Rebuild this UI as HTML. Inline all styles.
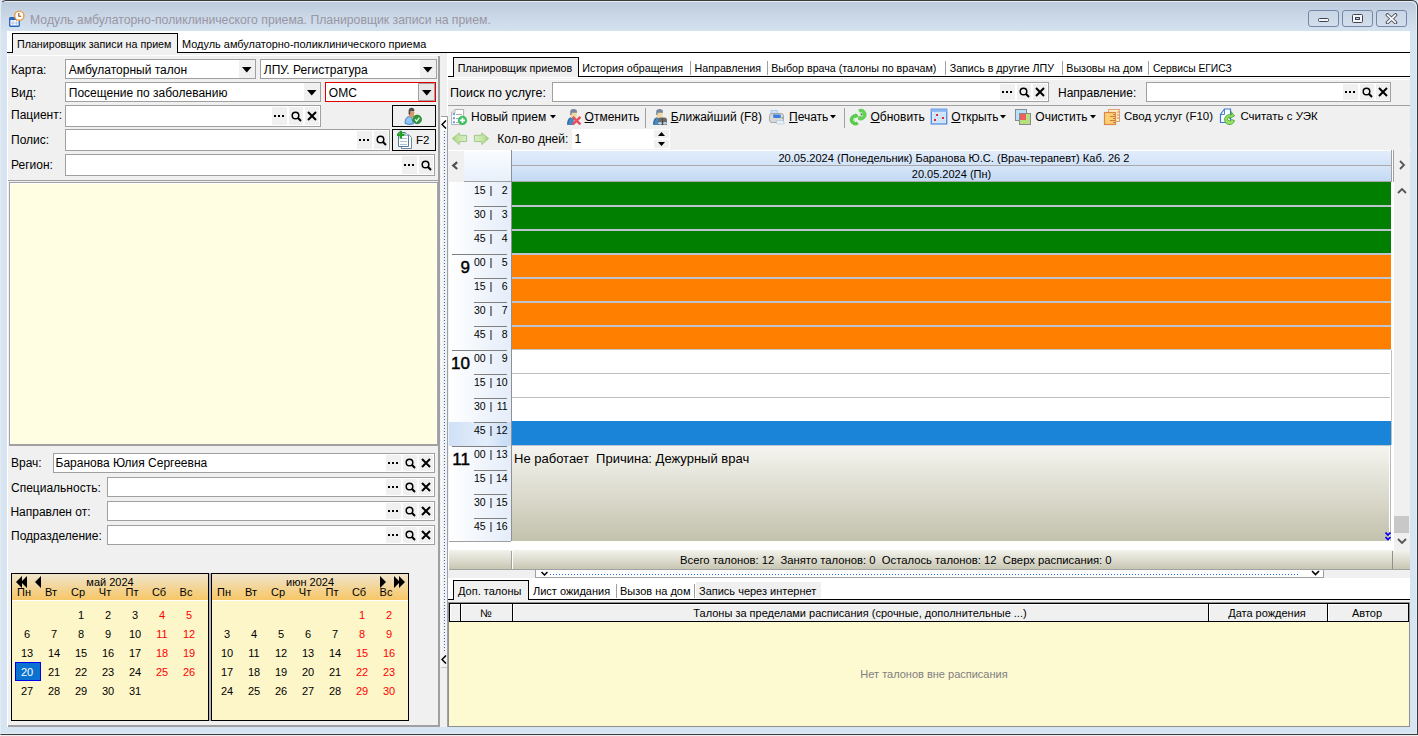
<!DOCTYPE html>
<html><head><meta charset="utf-8"><style>
html,body{margin:0;padding:0;width:1418px;height:736px;overflow:hidden;background:#d7e4f2;}
body{position:relative;font-family:"Liberation Sans",sans-serif;}
div{position:absolute;}
.t{line-height:1;white-space:pre;}
u{text-decoration:underline;text-underline-offset:1px;}
</style></head><body>
<div style="left:0px;top:735px;width:1418px;height:1px;background:#eef0f2;"></div>
<div style="left:0px;top:0px;width:1418px;height:735px;box-sizing:border-box;border:1px solid #3a3a3a;border-left-color:#e6ebf1;border-radius:6px 6px 0 0;background:linear-gradient(#bccbdc 0px,#d6e3f1 31px,#d7e4f2 31px);box-shadow:inset -1px 1px 0 #e4ecf6, inset 0 -1px 0 #e4ecf6;"></div>
<svg style="position:absolute;left:8px;top:10px" width="18" height="18" viewBox="0 0 18 18"><rect x="1.7" y="7.7" width="9.6" height="8.6" rx="1" fill="#fff" stroke="#2a66c0" stroke-width="1.4"/><rect x="1.7" y="7.7" width="9.6" height="2.3" fill="#2a66c0"/><path d="M1.7 13h9.6M5 10v6M8.3 10v6" stroke="#9cb8e0" stroke-width="0.8"/><circle cx="11.3" cy="5.7" r="4.6" fill="#fff" stroke="#ec9a3a" stroke-width="1.4"/><path d="M10.8 3v3.2h2.4" stroke="#a04818" stroke-width="1.1" fill="none"/></svg>
<div class="t" style="left:30px;top:14.13px;font-size:12.25px;color:#9a96a4;">Модуль амбулаторно-поликлинического приема. Планировщик записи на прием.</div>
<div style="left:1308px;top:10px;width:31px;height:17px;box-sizing:border-box;border:1px solid #7686a6;border-radius:3px;background:linear-gradient(#c8d5e4,#d3dfec);"></div>
<div style="left:1318px;top:18px;width:11px;height:4px;box-sizing:border-box;border:1px solid #3e4656;border-radius:1.5px;background:#f4f4f4;"></div>
<div style="left:1342px;top:10px;width:31px;height:17px;box-sizing:border-box;border:1px solid #7686a6;border-radius:3px;background:linear-gradient(#c8d5e4,#d3dfec);"></div>
<div style="left:1352px;top:14px;width:11px;height:9px;box-sizing:border-box;border:1px solid #3e4656;border-radius:1.5px;background:#f6f6f6;"></div>
<div style="left:1355px;top:17px;width:5px;height:3px;box-sizing:border-box;border:1px solid #3e4656;background:#b8c8dc;"></div>
<div style="left:1376px;top:10px;width:31px;height:17px;box-sizing:border-box;border:1px solid #7686a6;border-radius:3px;background:linear-gradient(#c8d5e4,#d3dfec);"></div>
<svg style="position:absolute;left:1385px;top:13px" width="13" height="11" viewBox="0 0 13 11"><path d="M2.5 2L10.5 9.5M10.5 2L2.5 9.5" stroke="#3e4656" stroke-width="3.6" stroke-linecap="round"/><path d="M2.5 2L10.5 9.5M10.5 2L2.5 9.5" stroke="#f6f6f6" stroke-width="1.8" stroke-linecap="round"/></svg>
<div style="left:7px;top:31px;width:1403px;height:696px;background:#fff;"></div>
<div style="left:7px;top:52px;width:5px;height:1px;background:#000;"></div>
<div style="left:177px;top:52px;width:1233px;height:1px;background:#000;"></div>
<div style="left:12px;top:33px;width:166px;height:21px;box-sizing:border-box;border:1px solid #000;border-bottom:none;background:#f0f0f0;"></div>
<div class="t" style="left:17px;top:38.94px;font-size:10.7px;color:#000;">Планировщик записи на прием</div>
<div class="t" style="left:182px;top:38.73px;font-size:10.95px;color:#000;">Модуль амбулаторно-поликлинического приема</div>
<div style="left:7px;top:53px;width:440px;height:674px;background:#f0f0f0;"></div>
<div style="left:7px;top:53px;width:1px;height:674px;background:#fff;"></div>
<div style="left:8px;top:55px;width:432px;height:1px;background:#fff;"></div>
<div style="left:438px;top:56px;width:2px;height:671px;background:#a0a0a0;"></div>
<div style="left:8px;top:725px;width:432px;height:2px;background:#a0a0a0;"></div>
<div class="t" style="left:11px;top:63.84px;font-size:12px;color:#000;">Карта:</div>
<div style="left:65px;top:59px;width:191px;height:20px;box-sizing:border-box;border:1px solid #a0a0a0;background:#fff;"></div>
<div class="t" style="left:68.8px;top:63.84px;font-size:12px;color:#000;">Амбулаторный талон</div>
<div style="left:239px;top:60px;width:16px;height:18px;background:#f0f0f0;"></div>
<svg style="position:absolute;left:242px;top:66.8px" width="10" height="6" viewBox="0 0 10 6"><path d="M0 0H9.5L4.75 5.5Z" fill="#000"/></svg>
<div style="left:260px;top:59px;width:177px;height:20px;box-sizing:border-box;border:1px solid #a0a0a0;background:#fff;"></div>
<div class="t" style="left:263.8px;top:63.84px;font-size:12px;color:#000;">ЛПУ. Регистратура</div>
<div style="left:420px;top:60px;width:16px;height:18px;background:#f0f0f0;"></div>
<svg style="position:absolute;left:423px;top:66.8px" width="10" height="6" viewBox="0 0 10 6"><path d="M0 0H9.5L4.75 5.5Z" fill="#000"/></svg>
<div class="t" style="left:11px;top:86.84px;font-size:12px;color:#000;">Вид:</div>
<div style="left:65px;top:82px;width:256px;height:20px;box-sizing:border-box;border:1px solid #a0a0a0;background:#fff;"></div>
<div class="t" style="left:68.8px;top:86.84px;font-size:12px;color:#000;">Посещение по заболеванию</div>
<div style="left:304px;top:83px;width:16px;height:18px;background:#f0f0f0;"></div>
<svg style="position:absolute;left:307px;top:89.8px" width="10" height="6" viewBox="0 0 10 6"><path d="M0 0H9.5L4.75 5.5Z" fill="#000"/></svg>
<div style="left:325px;top:82px;width:111px;height:20px;box-sizing:border-box;border:1px solid #e00000;background:#fff;"></div>
<div class="t" style="left:328.8px;top:86.84px;font-size:12px;color:#000;">ОМС</div>
<div style="left:418px;top:83px;width:17px;height:18px;box-sizing:border-box;border:1px solid #a0a0a0;background:#e8e8e8;"></div>
<svg style="position:absolute;left:422px;top:89.8px" width="10" height="6" viewBox="0 0 10 6"><path d="M0 0H9.5L4.75 5.5Z" fill="#000"/></svg>
<div class="t" style="left:11px;top:108.84px;font-size:12px;color:#000;">Пациент:</div>
<div style="left:65px;top:105px;width:256px;height:22px;box-sizing:border-box;border:1px solid #a0a0a0;background:#fff;"></div>
<div style="left:272px;top:107px;width:15px;height:18px;background:#f0f0f0;"></div>
<div style="left:274px;top:115.0px;width:2.2px;height:2.2px;background:#000;"></div>
<div style="left:278px;top:115.0px;width:2.2px;height:2.2px;background:#000;"></div>
<div style="left:282px;top:115.0px;width:2.2px;height:2.2px;background:#000;"></div>
<div style="left:289px;top:107px;width:14px;height:18px;background:#f0f0f0;"></div>
<svg style="position:absolute;left:291px;top:111.0px" width="11" height="11" viewBox="0 0 11 11"><circle cx="4.5" cy="4.5" r="3.3" fill="none" stroke="#000" stroke-width="1.5"/><path d="M6.8 6.8L10 10" stroke="#000" stroke-width="2"/></svg>
<div style="left:305px;top:107px;width:14px;height:18px;background:#f0f0f0;"></div>
<svg style="position:absolute;left:307px;top:111.0px" width="10" height="10" viewBox="0 0 10 10"><path d="M1 1L9 9M9 1L1 9" stroke="#000" stroke-width="2"/></svg>
<div class="t" style="left:11px;top:133.84px;font-size:12px;color:#000;">Полис:</div>
<div style="left:65px;top:129px;width:325px;height:22px;box-sizing:border-box;border:1px solid #a0a0a0;background:#fff;"></div>
<div style="left:357px;top:131px;width:15px;height:18px;background:#f0f0f0;"></div>
<div style="left:359px;top:139.0px;width:2.2px;height:2.2px;background:#000;"></div>
<div style="left:363px;top:139.0px;width:2.2px;height:2.2px;background:#000;"></div>
<div style="left:367px;top:139.0px;width:2.2px;height:2.2px;background:#000;"></div>
<div style="left:374px;top:131px;width:14px;height:18px;background:#f0f0f0;"></div>
<svg style="position:absolute;left:376px;top:135.0px" width="11" height="11" viewBox="0 0 11 11"><circle cx="4.5" cy="4.5" r="3.3" fill="none" stroke="#000" stroke-width="1.5"/><path d="M6.8 6.8L10 10" stroke="#000" stroke-width="2"/></svg>
<div class="t" style="left:11px;top:158.84px;font-size:12px;color:#000;">Регион:</div>
<div style="left:65px;top:154px;width:370px;height:22px;box-sizing:border-box;border:1px solid #a0a0a0;background:#fff;"></div>
<div style="left:402px;top:156px;width:15px;height:18px;background:#f0f0f0;"></div>
<div style="left:404px;top:164.0px;width:2.2px;height:2.2px;background:#000;"></div>
<div style="left:408px;top:164.0px;width:2.2px;height:2.2px;background:#000;"></div>
<div style="left:412px;top:164.0px;width:2.2px;height:2.2px;background:#000;"></div>
<div style="left:419px;top:156px;width:14px;height:18px;background:#f0f0f0;"></div>
<svg style="position:absolute;left:421px;top:160.0px" width="11" height="11" viewBox="0 0 11 11"><circle cx="4.5" cy="4.5" r="3.3" fill="none" stroke="#000" stroke-width="1.5"/><path d="M6.8 6.8L10 10" stroke="#000" stroke-width="2"/></svg>
<div style="left:392px;top:105px;width:44px;height:22px;box-sizing:border-box;border:1.5px solid #000;background:#f0f0f0;"></div>
<svg style="position:absolute;left:392px;top:104px" width="44" height="24" viewBox="0 0 44 24"><path d="M13.2 19.6Q12.6 14.2 16.5 12.6L19.5 13.2L21.5 19.8Q17 21.2 13.2 19.6Z" fill="#8cc6f6" stroke="#3674c0" stroke-width="0.9"/><rect x="17" y="6" width="5.2" height="7.6" rx="2.2" fill="#d89a68"/><path d="M16.6 10.5V7Q16.8 3.6 19.8 3.8Q22.6 4 22.4 7H18.2V10.5Z" fill="#4a4a4a"/><circle cx="25.2" cy="15.4" r="4.3" fill="#2e9a3a" stroke="#1c7a28" stroke-width="0.7"/><path d="M23 15.4L24.6 17.2L27.4 13.6" stroke="#e8f8e8" stroke-width="1.3" fill="none"/></svg>
<div style="left:392px;top:129px;width:44px;height:22px;box-sizing:border-box;border:1.5px solid #000;background:#f0f0f0;"></div>
<svg style="position:absolute;left:392px;top:128px" width="24" height="24" viewBox="0 0 24 24"><path d="M9.5 6.5H16.5L19.5 9.5V20.5H9.5Z" fill="#fff" stroke="#6a8aa8"/><path d="M6.5 4.5H13.5L16.5 7.5V18.5H6.5Z" fill="#fff" stroke="#5a7a98"/><path d="M13.5 4.5V7.5H16.5" fill="#dde8f2" stroke="#8aa8c8" stroke-width="0.8"/><path d="M8 10.5H15M8 13.5H15M8 16.5H15" stroke="#a8c0d8" stroke-width="1.2"/><path d="M8.8 2.8V10.6M5 6.7H12.6" stroke="#22a022" stroke-width="2.4"/></svg>
<div class="t" style="left:416px;top:135.27px;font-size:11.5px;color:#000;">F2</div>
<div style="left:8px;top:180px;width:430px;height:1px;background:#a0a0a0;"></div>
<div style="left:9px;top:182px;width:429px;height:264px;box-sizing:border-box;border:1px solid #a0a4a8;border-bottom:2px solid #a0a0a0;background:#fffee2;"></div>
<div style="left:10px;top:183px;width:427px;height:1px;background:#fff;"></div>
<div style="left:10px;top:183px;width:1px;height:261px;background:#fff;"></div>
<div style="left:436px;top:183px;width:1px;height:261px;background:#fff;"></div>
<div class="t" style="left:11px;top:456.84px;font-size:12px;color:#000;">Врач:</div>
<div style="left:53px;top:453px;width:382px;height:20px;box-sizing:border-box;border:1px solid #a0a0a0;background:#fff;"></div>
<div class="t" style="left:55.5px;top:456.84px;font-size:12px;color:#000;">Баранова Юлия Сергеевна</div>
<div style="left:386px;top:455px;width:15px;height:16px;background:#f0f0f0;"></div>
<div style="left:388px;top:462.0px;width:2.2px;height:2.2px;background:#000;"></div>
<div style="left:392px;top:462.0px;width:2.2px;height:2.2px;background:#000;"></div>
<div style="left:396px;top:462.0px;width:2.2px;height:2.2px;background:#000;"></div>
<div style="left:403px;top:455px;width:14px;height:16px;background:#f0f0f0;"></div>
<svg style="position:absolute;left:405px;top:458.0px" width="11" height="11" viewBox="0 0 11 11"><circle cx="4.5" cy="4.5" r="3.3" fill="none" stroke="#000" stroke-width="1.5"/><path d="M6.8 6.8L10 10" stroke="#000" stroke-width="2"/></svg>
<div style="left:419px;top:455px;width:14px;height:16px;background:#f0f0f0;"></div>
<svg style="position:absolute;left:421px;top:458.0px" width="10" height="10" viewBox="0 0 10 10"><path d="M1 1L9 9M9 1L1 9" stroke="#000" stroke-width="2"/></svg>
<div class="t" style="left:11px;top:481.84px;font-size:12px;color:#000;">Специальность:</div>
<div style="left:107px;top:477px;width:328px;height:20px;box-sizing:border-box;border:1px solid #a0a0a0;background:#fff;"></div>
<div style="left:386px;top:479px;width:15px;height:16px;background:#f0f0f0;"></div>
<div style="left:388px;top:486.0px;width:2.2px;height:2.2px;background:#000;"></div>
<div style="left:392px;top:486.0px;width:2.2px;height:2.2px;background:#000;"></div>
<div style="left:396px;top:486.0px;width:2.2px;height:2.2px;background:#000;"></div>
<div style="left:403px;top:479px;width:14px;height:16px;background:#f0f0f0;"></div>
<svg style="position:absolute;left:405px;top:482.0px" width="11" height="11" viewBox="0 0 11 11"><circle cx="4.5" cy="4.5" r="3.3" fill="none" stroke="#000" stroke-width="1.5"/><path d="M6.8 6.8L10 10" stroke="#000" stroke-width="2"/></svg>
<div style="left:419px;top:479px;width:14px;height:16px;background:#f0f0f0;"></div>
<svg style="position:absolute;left:421px;top:482.0px" width="10" height="10" viewBox="0 0 10 10"><path d="M1 1L9 9M9 1L1 9" stroke="#000" stroke-width="2"/></svg>
<div class="t" style="left:10.4px;top:505.84px;font-size:12px;color:#000;">Направлен от:</div>
<div style="left:107px;top:501px;width:328px;height:20px;box-sizing:border-box;border:1px solid #a0a0a0;background:#fff;"></div>
<div style="left:386px;top:503px;width:15px;height:16px;background:#f0f0f0;"></div>
<div style="left:388px;top:510.0px;width:2.2px;height:2.2px;background:#000;"></div>
<div style="left:392px;top:510.0px;width:2.2px;height:2.2px;background:#000;"></div>
<div style="left:396px;top:510.0px;width:2.2px;height:2.2px;background:#000;"></div>
<div style="left:403px;top:503px;width:14px;height:16px;background:#f0f0f0;"></div>
<svg style="position:absolute;left:405px;top:506.0px" width="11" height="11" viewBox="0 0 11 11"><circle cx="4.5" cy="4.5" r="3.3" fill="none" stroke="#000" stroke-width="1.5"/><path d="M6.8 6.8L10 10" stroke="#000" stroke-width="2"/></svg>
<div style="left:419px;top:503px;width:14px;height:16px;background:#f0f0f0;"></div>
<svg style="position:absolute;left:421px;top:506.0px" width="10" height="10" viewBox="0 0 10 10"><path d="M1 1L9 9M9 1L1 9" stroke="#000" stroke-width="2"/></svg>
<div class="t" style="left:11px;top:529.84px;font-size:12px;color:#000;">Подразделение:</div>
<div style="left:107px;top:525px;width:328px;height:20px;box-sizing:border-box;border:1px solid #a0a0a0;background:#fff;"></div>
<div style="left:386px;top:527px;width:15px;height:16px;background:#f0f0f0;"></div>
<div style="left:388px;top:534.0px;width:2.2px;height:2.2px;background:#000;"></div>
<div style="left:392px;top:534.0px;width:2.2px;height:2.2px;background:#000;"></div>
<div style="left:396px;top:534.0px;width:2.2px;height:2.2px;background:#000;"></div>
<div style="left:403px;top:527px;width:14px;height:16px;background:#f0f0f0;"></div>
<svg style="position:absolute;left:405px;top:530.0px" width="11" height="11" viewBox="0 0 11 11"><circle cx="4.5" cy="4.5" r="3.3" fill="none" stroke="#000" stroke-width="1.5"/><path d="M6.8 6.8L10 10" stroke="#000" stroke-width="2"/></svg>
<div style="left:419px;top:527px;width:14px;height:16px;background:#f0f0f0;"></div>
<svg style="position:absolute;left:421px;top:530.0px" width="10" height="10" viewBox="0 0 10 10"><path d="M1 1L9 9M9 1L1 9" stroke="#000" stroke-width="2"/></svg>
<div style="left:11px;top:573px;width:198px;height:148px;box-sizing:border-box;border:1px solid #000;background:#fdf6c8;"></div>
<div style="left:12px;top:574px;width:196px;height:26px;background:linear-gradient(#efe4cc,#f7c766);"></div>
<div style="left:12px;top:600px;width:196px;height:1px;background:#fff;"></div>
<div class="t" style="left:-190px;width:600px;text-align:center;top:576.69px;font-size:11px;color:#000;">май 2024</div>
<div class="t" style="left:-276px;width:600px;text-align:center;top:586.69px;font-size:11px;color:#000;">Пн</div>
<div class="t" style="left:-249px;width:600px;text-align:center;top:586.69px;font-size:11px;color:#000;">Вт</div>
<div class="t" style="left:-222px;width:600px;text-align:center;top:586.69px;font-size:11px;color:#000;">Ср</div>
<div class="t" style="left:-195px;width:600px;text-align:center;top:586.69px;font-size:11px;color:#000;">Чт</div>
<div class="t" style="left:-168px;width:600px;text-align:center;top:586.69px;font-size:11px;color:#000;">Пт</div>
<div class="t" style="left:-141px;width:600px;text-align:center;top:586.69px;font-size:11px;color:#000;">Сб</div>
<div class="t" style="left:-114px;width:600px;text-align:center;top:586.69px;font-size:11px;color:#000;">Вс</div>
<div class="t" style="left:-219px;width:600px;text-align:center;top:610.19px;font-size:11px;color:#000;">1</div>
<div class="t" style="left:-192px;width:600px;text-align:center;top:610.19px;font-size:11px;color:#000;">2</div>
<div class="t" style="left:-165px;width:600px;text-align:center;top:610.19px;font-size:11px;color:#000;">3</div>
<div class="t" style="left:-138px;width:600px;text-align:center;top:610.19px;font-size:11px;color:#ff0000;">4</div>
<div class="t" style="left:-111px;width:600px;text-align:center;top:610.19px;font-size:11px;color:#ff0000;">5</div>
<div class="t" style="left:-273px;width:600px;text-align:center;top:629.19px;font-size:11px;color:#000;">6</div>
<div class="t" style="left:-246px;width:600px;text-align:center;top:629.19px;font-size:11px;color:#000;">7</div>
<div class="t" style="left:-219px;width:600px;text-align:center;top:629.19px;font-size:11px;color:#000;">8</div>
<div class="t" style="left:-192px;width:600px;text-align:center;top:629.19px;font-size:11px;color:#000;">9</div>
<div class="t" style="left:-165px;width:600px;text-align:center;top:629.19px;font-size:11px;color:#000;">10</div>
<div class="t" style="left:-138px;width:600px;text-align:center;top:629.19px;font-size:11px;color:#ff0000;">11</div>
<div class="t" style="left:-111px;width:600px;text-align:center;top:629.19px;font-size:11px;color:#ff0000;">12</div>
<div class="t" style="left:-273px;width:600px;text-align:center;top:648.19px;font-size:11px;color:#000;">13</div>
<div class="t" style="left:-246px;width:600px;text-align:center;top:648.19px;font-size:11px;color:#000;">14</div>
<div class="t" style="left:-219px;width:600px;text-align:center;top:648.19px;font-size:11px;color:#000;">15</div>
<div class="t" style="left:-192px;width:600px;text-align:center;top:648.19px;font-size:11px;color:#000;">16</div>
<div class="t" style="left:-165px;width:600px;text-align:center;top:648.19px;font-size:11px;color:#000;">17</div>
<div class="t" style="left:-138px;width:600px;text-align:center;top:648.19px;font-size:11px;color:#ff0000;">18</div>
<div class="t" style="left:-111px;width:600px;text-align:center;top:648.19px;font-size:11px;color:#ff0000;">19</div>
<div style="left:15px;top:662px;width:26px;height:19px;box-sizing:border-box;border:1px solid #0000f0;background:#0a72d0;"></div>
<div class="t" style="left:-273px;width:600px;text-align:center;top:667.19px;font-size:11px;color:#fff;">20</div>
<div class="t" style="left:-246px;width:600px;text-align:center;top:667.19px;font-size:11px;color:#000;">21</div>
<div class="t" style="left:-219px;width:600px;text-align:center;top:667.19px;font-size:11px;color:#000;">22</div>
<div class="t" style="left:-192px;width:600px;text-align:center;top:667.19px;font-size:11px;color:#000;">23</div>
<div class="t" style="left:-165px;width:600px;text-align:center;top:667.19px;font-size:11px;color:#000;">24</div>
<div class="t" style="left:-138px;width:600px;text-align:center;top:667.19px;font-size:11px;color:#ff0000;">25</div>
<div class="t" style="left:-111px;width:600px;text-align:center;top:667.19px;font-size:11px;color:#ff0000;">26</div>
<div class="t" style="left:-273px;width:600px;text-align:center;top:686.19px;font-size:11px;color:#000;">27</div>
<div class="t" style="left:-246px;width:600px;text-align:center;top:686.19px;font-size:11px;color:#000;">28</div>
<div class="t" style="left:-219px;width:600px;text-align:center;top:686.19px;font-size:11px;color:#000;">29</div>
<div class="t" style="left:-192px;width:600px;text-align:center;top:686.19px;font-size:11px;color:#000;">30</div>
<div class="t" style="left:-165px;width:600px;text-align:center;top:686.19px;font-size:11px;color:#000;">31</div>
<div style="left:209px;top:573px;width:2px;height:148px;background:#b4b4bc;"></div>
<div style="left:211px;top:573px;width:198px;height:148px;box-sizing:border-box;border:1px solid #000;background:#fdf6c8;"></div>
<div style="left:212px;top:574px;width:196px;height:26px;background:linear-gradient(#efe4cc,#f7c766);"></div>
<div style="left:212px;top:600px;width:196px;height:1px;background:#fff;"></div>
<div class="t" style="left:10px;width:600px;text-align:center;top:576.69px;font-size:11px;color:#000;">июн 2024</div>
<div class="t" style="left:-76px;width:600px;text-align:center;top:586.69px;font-size:11px;color:#000;">Пн</div>
<div class="t" style="left:-49px;width:600px;text-align:center;top:586.69px;font-size:11px;color:#000;">Вт</div>
<div class="t" style="left:-22px;width:600px;text-align:center;top:586.69px;font-size:11px;color:#000;">Ср</div>
<div class="t" style="left:5px;width:600px;text-align:center;top:586.69px;font-size:11px;color:#000;">Чт</div>
<div class="t" style="left:32px;width:600px;text-align:center;top:586.69px;font-size:11px;color:#000;">Пт</div>
<div class="t" style="left:59px;width:600px;text-align:center;top:586.69px;font-size:11px;color:#000;">Сб</div>
<div class="t" style="left:86px;width:600px;text-align:center;top:586.69px;font-size:11px;color:#000;">Вс</div>
<div class="t" style="left:62px;width:600px;text-align:center;top:610.19px;font-size:11px;color:#ff0000;">1</div>
<div class="t" style="left:89px;width:600px;text-align:center;top:610.19px;font-size:11px;color:#ff0000;">2</div>
<div class="t" style="left:-73px;width:600px;text-align:center;top:629.19px;font-size:11px;color:#000;">3</div>
<div class="t" style="left:-46px;width:600px;text-align:center;top:629.19px;font-size:11px;color:#000;">4</div>
<div class="t" style="left:-19px;width:600px;text-align:center;top:629.19px;font-size:11px;color:#000;">5</div>
<div class="t" style="left:8px;width:600px;text-align:center;top:629.19px;font-size:11px;color:#000;">6</div>
<div class="t" style="left:35px;width:600px;text-align:center;top:629.19px;font-size:11px;color:#000;">7</div>
<div class="t" style="left:62px;width:600px;text-align:center;top:629.19px;font-size:11px;color:#ff0000;">8</div>
<div class="t" style="left:89px;width:600px;text-align:center;top:629.19px;font-size:11px;color:#ff0000;">9</div>
<div class="t" style="left:-73px;width:600px;text-align:center;top:648.19px;font-size:11px;color:#000;">10</div>
<div class="t" style="left:-46px;width:600px;text-align:center;top:648.19px;font-size:11px;color:#000;">11</div>
<div class="t" style="left:-19px;width:600px;text-align:center;top:648.19px;font-size:11px;color:#000;">12</div>
<div class="t" style="left:8px;width:600px;text-align:center;top:648.19px;font-size:11px;color:#000;">13</div>
<div class="t" style="left:35px;width:600px;text-align:center;top:648.19px;font-size:11px;color:#000;">14</div>
<div class="t" style="left:62px;width:600px;text-align:center;top:648.19px;font-size:11px;color:#ff0000;">15</div>
<div class="t" style="left:89px;width:600px;text-align:center;top:648.19px;font-size:11px;color:#ff0000;">16</div>
<div class="t" style="left:-73px;width:600px;text-align:center;top:667.19px;font-size:11px;color:#000;">17</div>
<div class="t" style="left:-46px;width:600px;text-align:center;top:667.19px;font-size:11px;color:#000;">18</div>
<div class="t" style="left:-19px;width:600px;text-align:center;top:667.19px;font-size:11px;color:#000;">19</div>
<div class="t" style="left:8px;width:600px;text-align:center;top:667.19px;font-size:11px;color:#000;">20</div>
<div class="t" style="left:35px;width:600px;text-align:center;top:667.19px;font-size:11px;color:#000;">21</div>
<div class="t" style="left:62px;width:600px;text-align:center;top:667.19px;font-size:11px;color:#ff0000;">22</div>
<div class="t" style="left:89px;width:600px;text-align:center;top:667.19px;font-size:11px;color:#ff0000;">23</div>
<div class="t" style="left:-73px;width:600px;text-align:center;top:686.19px;font-size:11px;color:#000;">24</div>
<div class="t" style="left:-46px;width:600px;text-align:center;top:686.19px;font-size:11px;color:#000;">25</div>
<div class="t" style="left:-19px;width:600px;text-align:center;top:686.19px;font-size:11px;color:#000;">26</div>
<div class="t" style="left:8px;width:600px;text-align:center;top:686.19px;font-size:11px;color:#000;">27</div>
<div class="t" style="left:35px;width:600px;text-align:center;top:686.19px;font-size:11px;color:#000;">28</div>
<div class="t" style="left:62px;width:600px;text-align:center;top:686.19px;font-size:11px;color:#ff0000;">29</div>
<div class="t" style="left:89px;width:600px;text-align:center;top:686.19px;font-size:11px;color:#ff0000;">30</div>
<svg style="position:absolute;left:16px;top:576px" width="26" height="12" viewBox="0 0 26 12"><path d="M6 0L0 6L6 12Z M11 0L5 6L11 12Z M25 0L19 6L25 12Z" fill="#000"/></svg>
<svg style="position:absolute;left:380px;top:576px" width="26" height="12" viewBox="0 0 26 12"><path d="M0 0L6 6L0 12Z M14 0L20 6L14 12Z M19 0L25 6L19 12Z" fill="#000"/></svg>
<div style="left:441px;top:116px;width:7px;height:15px;box-sizing:border-box;border-top:1px solid #a0a0a0;border-right:1px solid #a0a0a0;background:#fff;"></div>
<svg style="position:absolute;left:441px;top:120px" width="6" height="9" viewBox="0 0 6 9"><path d="M5 0.5L1 4.5L5 8.5" stroke="#000" stroke-width="1.5" fill="none"/></svg>
<div style="left:441px;top:131px;width:6px;height:536px;background:#f2f2f2;"></div>
<div style="left:441px;top:131px;width:1px;height:536px;background:#fff;"></div>
<div style="left:444px;top:131px;width:1.4px;height:521px;background:repeating-linear-gradient(#1a6ee0 0 1.4px,transparent 1.4px 3px);"></div>
<svg style="position:absolute;left:441px;top:655px" width="6" height="9" viewBox="0 0 6 9"><path d="M5 0.5L1 4.5L5 8.5" stroke="#000" stroke-width="1.5" fill="none"/></svg>
<div style="left:441px;top:667px;width:6px;height:1px;background:#c8c8c8;"></div>
<div style="left:447px;top:116px;width:1px;height:611px;background:#a0a0a0;"></div>
<div style="left:448px;top:53px;width:962px;height:674px;background:#fff;"></div>
<div style="left:448px;top:76px;width:5px;height:1px;background:#000;"></div>
<div style="left:578px;top:76px;width:832px;height:1px;background:#000;"></div>
<div style="left:453px;top:57px;width:126px;height:20px;box-sizing:border-box;border:1px solid #000;border-bottom:none;background:#f0f0f0;"></div>
<div class="t" style="left:457.8px;top:63.44px;font-size:10.7px;color:#000;">Планировщик приемов</div>
<div class="t" style="left:582.3px;top:63.44px;font-size:10.7px;color:#000;">История обращения</div>
<div class="t" style="left:694.5px;top:63.44px;font-size:10.7px;color:#000;">Направления</div>
<div class="t" style="left:771.2px;top:63.44px;font-size:10.7px;color:#000;">Выбор врача (талоны по врачам)</div>
<div class="t" style="left:949.7px;top:63.44px;font-size:10.7px;color:#000;">Запись в другие ЛПУ</div>
<div class="t" style="left:1066.3px;top:63.44px;font-size:10.7px;color:#000;">Вызовы на дом</div>
<div class="t" style="left:1152.9px;top:63.78px;font-size:10.3px;color:#000;">Сервисы ЕГИСЗ</div>
<div style="left:690px;top:61px;width:1px;height:14px;background:#a0a0a0;"></div>
<div style="left:767px;top:61px;width:1px;height:14px;background:#a0a0a0;"></div>
<div style="left:945px;top:61px;width:1px;height:14px;background:#a0a0a0;"></div>
<div style="left:1062px;top:61px;width:1px;height:14px;background:#a0a0a0;"></div>
<div style="left:1148px;top:61px;width:1px;height:14px;background:#a0a0a0;"></div>
<div style="left:448px;top:78px;width:962px;height:27px;background:#f0f0f0;"></div>
<div style="left:448px;top:105px;width:962px;height:1px;background:#a0a0a0;"></div>
<div style="left:448px;top:79px;width:962px;height:1px;background:#fff;"></div>
<div class="t" style="left:450px;top:87.02px;font-size:12.5px;color:#000;">Поиск по услуге:</div>
<div style="left:552px;top:82px;width:497px;height:20px;box-sizing:border-box;border:1px solid #a0a0a0;background:#fff;"></div>
<div style="left:1000px;top:84px;width:15px;height:16px;background:#f0f0f0;"></div>
<div style="left:1002px;top:91.0px;width:2.2px;height:2.2px;background:#000;"></div>
<div style="left:1006px;top:91.0px;width:2.2px;height:2.2px;background:#000;"></div>
<div style="left:1010px;top:91.0px;width:2.2px;height:2.2px;background:#000;"></div>
<div style="left:1017px;top:84px;width:14px;height:16px;background:#f0f0f0;"></div>
<svg style="position:absolute;left:1019px;top:87.0px" width="11" height="11" viewBox="0 0 11 11"><circle cx="4.5" cy="4.5" r="3.3" fill="none" stroke="#000" stroke-width="1.5"/><path d="M6.8 6.8L10 10" stroke="#000" stroke-width="2"/></svg>
<div style="left:1033px;top:84px;width:14px;height:16px;background:#f0f0f0;"></div>
<svg style="position:absolute;left:1035px;top:87.0px" width="10" height="10" viewBox="0 0 10 10"><path d="M1 1L9 9M9 1L1 9" stroke="#000" stroke-width="2"/></svg>
<div class="t" style="left:1058px;top:87.44px;font-size:12px;color:#000;">Направление:</div>
<div style="left:1146px;top:82px;width:245px;height:20px;box-sizing:border-box;border:1px solid #a0a0a0;background:#fff;"></div>
<div style="left:1343px;top:84px;width:15px;height:16px;background:#f0f0f0;"></div>
<div style="left:1345px;top:91.0px;width:2.2px;height:2.2px;background:#000;"></div>
<div style="left:1349px;top:91.0px;width:2.2px;height:2.2px;background:#000;"></div>
<div style="left:1353px;top:91.0px;width:2.2px;height:2.2px;background:#000;"></div>
<div style="left:1360px;top:84px;width:14px;height:16px;background:#f0f0f0;"></div>
<svg style="position:absolute;left:1362px;top:87.0px" width="11" height="11" viewBox="0 0 11 11"><circle cx="4.5" cy="4.5" r="3.3" fill="none" stroke="#000" stroke-width="1.5"/><path d="M6.8 6.8L10 10" stroke="#000" stroke-width="2"/></svg>
<div style="left:1376px;top:84px;width:14px;height:16px;background:#f0f0f0;"></div>
<svg style="position:absolute;left:1378px;top:87.0px" width="10" height="10" viewBox="0 0 10 10"><path d="M1 1L9 9M9 1L1 9" stroke="#000" stroke-width="2"/></svg>
<div style="left:448px;top:106px;width:962px;height:44px;background:#f0f0f0;"></div>
<div class="t" style="left:471px;top:110.84px;font-size:12px;color:#000;">Новый прием</div>
<div class="t" style="left:584.6px;top:110.84px;font-size:12px;color:#000;"><u>О</u>тменить</div>
<div class="t" style="left:670.7px;top:110.84px;font-size:12px;color:#000;"><u>Б</u>лижайший (F8)</div>
<div class="t" style="left:789px;top:110.84px;font-size:12px;color:#000;"><u>П</u>ечать</div>
<div class="t" style="left:870.5px;top:110.84px;font-size:12px;color:#000;"><u>О</u>бновить</div>
<div class="t" style="left:951.3px;top:110.84px;font-size:12px;color:#000;"><u>О</u>ткрыть</div>
<div class="t" style="left:1035.3px;top:110.84px;font-size:12px;color:#000;">Очистить</div>
<div class="t" style="left:1124px;top:111.27px;font-size:11.5px;color:#000;">Свод услуг (F10)</div>
<div class="t" style="left:1240.4px;top:111.27px;font-size:11.5px;color:#000;">Считать с УЭК</div>
<svg style="position:absolute;left:550px;top:115px" width="6" height="4" viewBox="0 0 6 4"><path d="M0 0H6L3 3.5Z" fill="#000"/></svg>
<svg style="position:absolute;left:830px;top:115px" width="6" height="4" viewBox="0 0 6 4"><path d="M0 0H6L3 3.5Z" fill="#000"/></svg>
<svg style="position:absolute;left:1000px;top:115px" width="6" height="4" viewBox="0 0 6 4"><path d="M0 0H6L3 3.5Z" fill="#000"/></svg>
<svg style="position:absolute;left:1090px;top:115px" width="6" height="4" viewBox="0 0 6 4"><path d="M0 0H6L3 3.5Z" fill="#000"/></svg>
<div style="left:645px;top:108px;width:1px;height:20px;background:#a0a0a0;"></div>
<div style="left:844px;top:108px;width:1px;height:20px;background:#a0a0a0;"></div>
<svg style="position:absolute;left:448px;top:106px" width="22" height="22" viewBox="0 0 22 22"><path d="M3.6 6.8L6.8 3.5H15.6V18.6H3.6Z" fill="#fff" stroke="#b0b0b0" stroke-width="1"/><path d="M3.6 7H7V3.5" fill="#f0f0f0" stroke="#b8b8b8"/><rect x="5" y="7.2" width="2" height="2" fill="#6a9ee0"/><rect x="5" y="11.2" width="2" height="2" fill="#6a9ee0"/><rect x="5" y="15.2" width="2" height="2" fill="#6a9ee0"/><path d="M8 8.5h6M8 12.5h6M8 16.5h6" stroke="#a8a8a8"/><circle cx="14.5" cy="14.4" r="4.6" fill="#3cc060"/><path d="M14.5 11.8v5.2M11.9 14.4h5.2" stroke="#fff" stroke-width="1.6"/></svg>
<svg style="position:absolute;left:562px;top:106px" width="22" height="22" viewBox="0 0 22 22"><path d="M5 19C5 14 6.5 11.5 9 11.2L12 12L11.5 19Z" fill="#4a88c0"/><path d="M6 18C6 15 7 12.5 8.5 12" stroke="#2a5a90" stroke-width="0.8" fill="none"/><rect x="8.6" y="5" width="6.2" height="7" rx="2.5" fill="#f2d8a0"/><path d="M8.2 9V5.8Q8.2 3 11.5 3Q15 3 15 5.8V6.8H9.6V9Z" fill="#78889c"/><path d="M10.8 10.8L18.4 18.4M18.4 10.8L10.8 18.4" stroke="#e85060" stroke-width="2.6"/></svg>
<svg style="position:absolute;left:648px;top:106px" width="22" height="22" viewBox="0 0 22 22"><path d="M5 19C5 14 6.5 11.5 9 11.2L12 12L11.5 19Z" fill="#4a88c0"/><path d="M6 18C6 15 7 12.5 8.5 12" stroke="#2a5a90" stroke-width="0.8" fill="none"/><rect x="8.6" y="5" width="6.2" height="7" rx="2.5" fill="#f2d8a0"/><path d="M8.2 9V5.8Q8.2 3 11.5 3Q15 3 15 5.8V6.8H9.6V9Z" fill="#78889c"/><path d="M10 19V14.5Q10 11.5 12.5 11.5H16.5Q19 11.5 19 14.5V19Z" fill="#6a6a6a"/><ellipse cx="12" cy="17.2" rx="1.8" ry="1.3" fill="#b8d8f0"/><ellipse cx="17" cy="17.2" rx="1.8" ry="1.3" fill="#b8d8f0"/><path d="M14.5 12V19" stroke="#444" stroke-width="0.8"/></svg>
<svg style="position:absolute;left:764px;top:106px" width="22" height="22" viewBox="0 0 22 22"><path d="M7 4.5H13.5L14 8H7Z" fill="#cfe4fb" stroke="#8ab4e8" stroke-width="0.6"/><path d="M5.5 10Q5.5 7.5 8 7.5H17.5Q19.5 7.5 19.5 10V14.5Q19.5 16.5 17 16.5H8Q5.5 16.5 5.5 14Z" fill="#d8d8d8" stroke="#909090" stroke-width="0.7"/><path d="M9 8.5H16.5L17 12H9.5Z" fill="#3a7ee0"/><path d="M12 14.5H19L20.5 18H13Z" fill="#e4f0fc" stroke="#a0b8d0" stroke-width="0.5"/><circle cx="18.5" cy="12" r="0.7" fill="#40b040"/></svg>
<svg style="position:absolute;left:846px;top:106px" width="22" height="22" viewBox="0 0 22 22"><path d="M11.2 10.2A3.9 3.9 0 1 0 11.8 16.8" stroke="#58cc4c" stroke-width="3.4" fill="none"/><path d="M9.6 7L12.8 10.6L8.6 12Z" fill="#58cc4c"/><path d="M12.6 11.8A3.9 3.9 0 1 0 13 5.2" stroke="#62d256" stroke-width="3.4" fill="none"/><path d="M14.4 14.4L11.4 11L15.4 9.8Z" fill="#62d256"/><circle cx="15.6" cy="8.4" r="1.1" fill="#3a9a34"/><circle cx="8.2" cy="14" r="0.9" fill="#a8ec98"/></svg>
<svg style="position:absolute;left:927px;top:106px" width="22" height="22" viewBox="0 0 22 22"><rect x="4.3" y="3.3" width="15.4" height="14.6" fill="#dcecfc" stroke="#5a90e0" stroke-width="1.4"/><rect x="4.3" y="3.3" width="15.4" height="2.6" fill="#8ab8f4"/><path d="M5 9H19M5 12H19M5 15H19M8 6V17.5M11 6V17.5M14 6V17.5M17 6V17.5" stroke="#c0daf6" stroke-width="0.8"/><rect x="9" y="8" width="2" height="2" fill="#d83030"/><rect x="15" y="11" width="2" height="2" fill="#d83030"/><rect x="7" y="13" width="2" height="2" fill="#d83030"/></svg>
<svg style="position:absolute;left:1011px;top:106px" width="22" height="22" viewBox="0 0 22 22"><rect x="4.5" y="3.5" width="11" height="11" fill="#b8e0fa" stroke="#8a8a8a" stroke-width="1"/><rect x="8.5" y="7.5" width="11" height="11" fill="#b4e080" stroke="#8a8a8a" stroke-width="1"/><rect x="9" y="8" width="6" height="6" fill="#ec6060"/></svg>
<svg style="position:absolute;left:1100px;top:106px" width="22" height="22" viewBox="0 0 22 22"><rect x="8.5" y="3.5" width="11" height="12" fill="#fff0c8" stroke="#e0a070" stroke-width="1"/><rect x="4.5" y="6.5" width="11" height="12" fill="#fcd070" stroke="#d88848" stroke-width="1.2"/><path d="M13 8.5H15M10 10.5H15M13 12.5H15M10 14.5H15M13 16.5H15M17 6H19M17 9H19M17 12H19" stroke="#c87040" stroke-width="0.9"/></svg>
<svg style="position:absolute;left:1215px;top:106px" width="22" height="22" viewBox="0 0 22 22"><path d="M5.5 8.5L9.5 3H15.5V16.5H5.5Z" fill="#fff" stroke="#3a7ad0" stroke-width="1.2"/><path d="M5.5 8.5H9.5V3" fill="none" stroke="#3a7ad0" stroke-width="0.9"/><path d="M16.5 9A5 5 0 1 0 19.5 14.5L16.5 13.5A2 2 0 1 1 15 11L14 12.5L19.5 10L16 5.5Z" fill="#9ce060" stroke="#38a030" stroke-width="0.8"/></svg>
<svg style="position:absolute;left:448px;top:128px" width="46" height="22" viewBox="0 0 46 22"><defs><linearGradient id="ga" x1="0" x2="1"><stop offset="0" stop-color="#a6d476"/><stop offset="0.45" stop-color="#c6e6a8"/><stop offset="1" stop-color="#d6edc4"/></linearGradient><linearGradient id="gb" x1="1" x2="0"><stop offset="0" stop-color="#a6d476"/><stop offset="0.45" stop-color="#c6e6a8"/><stop offset="1" stop-color="#d6edc4"/></linearGradient></defs><path d="M4.3 10.5L11.2 4.9V7.3H18.6V13.6H11.2V16.5Z" fill="url(#ga)" stroke="#9cc486" stroke-width="0.9" stroke-linejoin="round"/><path d="M40.7 10.5L33.8 4.9V7.3H26.4V13.6H33.8V16.5Z" fill="url(#gb)" stroke="#9cc486" stroke-width="0.9" stroke-linejoin="round"/></svg>
<div class="t" style="left:497.3px;top:132.64px;font-size:12px;color:#000;">Кол-во дней:</div>
<div style="left:572px;top:129px;width:98px;height:20px;background:#fff;"></div>
<div class="t" style="left:574.5px;top:132.84px;font-size:12px;color:#000;">1</div>
<div style="left:654px;top:130px;width:15px;height:8px;background:#f0f0f0;"></div>
<div style="left:654px;top:140px;width:15px;height:8px;background:#f0f0f0;"></div>
<svg style="position:absolute;left:658px;top:132px" width="8" height="5" viewBox="0 0 8 5"><path d="M0 4H7L3.5 0Z" fill="#000"/></svg>
<svg style="position:absolute;left:658px;top:142px" width="8" height="5" viewBox="0 0 8 5"><path d="M0 0H7L3.5 4Z" fill="#000"/></svg>
<div style="left:448px;top:150px;width:16px;height:391px;background:#f0f0f0;"></div>
<svg style="position:absolute;left:451px;top:161px" width="8" height="10" viewBox="0 0 8 10"><path d="M6.2 1.2L2.2 4.6L6.2 8" stroke="#505050" stroke-width="2.2" fill="none"/></svg>
<div style="left:448px;top:150px;width:963px;height:1px;background:#fff;"></div>
<div style="left:464px;top:151px;width:47px;height:30px;background:linear-gradient(#fafcff,#e8f0fb);"></div>
<div style="left:464px;top:181px;width:47px;height:1px;background:#a0a0a0;"></div>
<div style="left:511px;top:150px;width:1px;height:391px;background:#909090;"></div>
<div style="left:512px;top:151px;width:879px;height:14px;background:linear-gradient(#e2edfb,#d2e2f7);"></div>
<div style="left:512px;top:165px;width:879px;height:1px;background:#a8a8a8;"></div>
<div style="left:512px;top:166px;width:879px;height:15px;background:linear-gradient(#d6e5f8,#c2d9f5);"></div>
<div style="left:512px;top:181px;width:879px;height:1px;background:#a8a8a8;"></div>
<div style="left:1391px;top:150px;width:1px;height:32px;background:#a0a0a0;"></div>
<div style="left:1393px;top:150px;width:1px;height:32px;background:#a0a0a0;"></div>
<div class="t" style="left:654px;width:600px;text-align:center;top:152.60px;font-size:11.1px;color:#000;">20.05.2024 (Понедельник) Баранова Ю.С. (Врач-терапевт) Каб. 26 2</div>
<div class="t" style="left:651.5px;width:600px;text-align:center;top:168.69px;font-size:11px;color:#000;">20.05.2024 (Пн)</div>
<div style="left:449px;top:182px;width:62px;height:359px;background:linear-gradient(90deg,#ffffff,#e4edf9);"></div>
<div style="left:449px;top:541px;width:62px;height:1px;background:#a0a0a0;"></div>
<div style="left:449px;top:422px;width:62px;height:24px;background:linear-gradient(90deg,#d0e0f6,#e4eefb 60%,#c4daf6);"></div>
<div style="left:512px;top:182px;width:878px;height:359px;background:#fff;"></div>
<div style="left:512px;top:182px;width:879px;height:23px;background:#007f00;"></div>
<div style="left:512px;top:205px;width:879px;height:2px;background:#bcc4d0;"></div>
<div style="left:512px;top:207px;width:879px;height:22px;background:#007f00;"></div>
<div style="left:512px;top:229px;width:879px;height:2px;background:#bcc4d0;"></div>
<div style="left:512px;top:231px;width:879px;height:22px;background:#007f00;"></div>
<div style="left:512px;top:253px;width:879px;height:2px;background:#bcc4d0;"></div>
<div style="left:512px;top:255px;width:879px;height:22px;background:#ff7f00;"></div>
<div style="left:512px;top:277px;width:879px;height:2px;background:#bcc4d0;"></div>
<div style="left:512px;top:279px;width:879px;height:22px;background:#ff7f00;"></div>
<div style="left:512px;top:301px;width:879px;height:2px;background:#bcc4d0;"></div>
<div style="left:512px;top:303px;width:879px;height:22px;background:#ff7f00;"></div>
<div style="left:512px;top:325px;width:879px;height:2px;background:#bcc4d0;"></div>
<div style="left:512px;top:327px;width:879px;height:22px;background:#ff7f00;"></div>
<div style="left:512px;top:349px;width:879px;height:1px;background:#bcc4d0;"></div>
<div style="left:512px;top:373px;width:878px;height:1px;background:#c0c0c0;"></div>
<div style="left:512px;top:397px;width:878px;height:1px;background:#c0c0c0;"></div>
<div style="left:512px;top:421px;width:878px;height:1px;background:#c0c0c0;"></div>
<div style="left:512px;top:423px;width:879px;height:22px;background:#1a84d8;"></div>
<div style="left:512px;top:445px;width:879px;height:2px;background:#bcc4d0;"></div>
<div style="left:512px;top:421px;width:879px;height:24px;background:#1a84d8;"></div>
<div style="left:512px;top:446px;width:878px;height:95px;background:linear-gradient(#f5f4ef,#c3c2ad);"></div>
<div style="left:1391px;top:350px;width:1px;height:95px;background:#c0c0c0;"></div>
<div style="left:1389px;top:446px;width:1px;height:95px;background:#fff;"></div>
<div style="left:1390px;top:446px;width:1px;height:95px;background:#b8b8b8;"></div>
<div class="t" style="left:514px;top:451.60px;font-size:13px;color:#000;">Не работает&nbsp; Причина: Дежурный врач</div>
<svg style="position:absolute;left:1385px;top:532px" width="6" height="10" viewBox="0 0 6 10"><path d="M0.5 0.5L3 3L5.5 0.5M0.5 5L3 7.5L5.5 5" stroke="#0000ff" stroke-width="1.6" fill="none"/></svg>
<div class="t" style="left:185.60000000000002px;width:300px;text-align:right;top:185.11px;font-size:10.5px;color:#000;">15</div>
<div class="t" style="left:489.5px;top:184.69px;font-size:11px;color:#000;">|</div>
<div class="t" style="left:207.60000000000002px;width:300px;text-align:right;top:185.11px;font-size:10.5px;color:#000;">2</div>
<div style="left:474px;top:206px;width:33px;height:1px;background:#808080;"></div>
<div class="t" style="left:185.60000000000002px;width:300px;text-align:right;top:209.11px;font-size:10.5px;color:#000;">30</div>
<div class="t" style="left:489.5px;top:208.69px;font-size:11px;color:#000;">|</div>
<div class="t" style="left:207.60000000000002px;width:300px;text-align:right;top:209.11px;font-size:10.5px;color:#000;">3</div>
<div style="left:474px;top:230px;width:33px;height:1px;background:#808080;"></div>
<div class="t" style="left:185.60000000000002px;width:300px;text-align:right;top:233.11px;font-size:10.5px;color:#000;">45</div>
<div class="t" style="left:489.5px;top:232.69px;font-size:11px;color:#000;">|</div>
<div class="t" style="left:207.60000000000002px;width:300px;text-align:right;top:233.11px;font-size:10.5px;color:#000;">4</div>
<div style="left:452px;top:254px;width:55px;height:1px;background:#808080;"></div>
<div class="t" style="left:170px;width:300px;text-align:right;top:258.61px;font-size:17px;color:#000;-webkit-text-stroke:0.45px #000;">9</div>
<div class="t" style="left:474px;top:256.71px;font-size:10.5px;color:#000;">00</div>
<div class="t" style="left:489.5px;top:256.69px;font-size:11px;color:#000;">|</div>
<div class="t" style="left:207.60000000000002px;width:300px;text-align:right;top:257.11px;font-size:10.5px;color:#000;">5</div>
<div style="left:474px;top:278px;width:33px;height:1px;background:#808080;"></div>
<div class="t" style="left:185.60000000000002px;width:300px;text-align:right;top:281.11px;font-size:10.5px;color:#000;">15</div>
<div class="t" style="left:489.5px;top:280.69px;font-size:11px;color:#000;">|</div>
<div class="t" style="left:207.60000000000002px;width:300px;text-align:right;top:281.11px;font-size:10.5px;color:#000;">6</div>
<div style="left:474px;top:302px;width:33px;height:1px;background:#808080;"></div>
<div class="t" style="left:185.60000000000002px;width:300px;text-align:right;top:305.11px;font-size:10.5px;color:#000;">30</div>
<div class="t" style="left:489.5px;top:304.69px;font-size:11px;color:#000;">|</div>
<div class="t" style="left:207.60000000000002px;width:300px;text-align:right;top:305.11px;font-size:10.5px;color:#000;">7</div>
<div style="left:474px;top:326px;width:33px;height:1px;background:#808080;"></div>
<div class="t" style="left:185.60000000000002px;width:300px;text-align:right;top:329.11px;font-size:10.5px;color:#000;">45</div>
<div class="t" style="left:489.5px;top:328.69px;font-size:11px;color:#000;">|</div>
<div class="t" style="left:207.60000000000002px;width:300px;text-align:right;top:329.11px;font-size:10.5px;color:#000;">8</div>
<div style="left:452px;top:350px;width:55px;height:1px;background:#808080;"></div>
<div class="t" style="left:170px;width:300px;text-align:right;top:354.61px;font-size:17px;color:#000;-webkit-text-stroke:0.45px #000;">10</div>
<div class="t" style="left:474px;top:352.71px;font-size:10.5px;color:#000;">00</div>
<div class="t" style="left:489.5px;top:352.69px;font-size:11px;color:#000;">|</div>
<div class="t" style="left:207.60000000000002px;width:300px;text-align:right;top:353.11px;font-size:10.5px;color:#000;">9</div>
<div style="left:474px;top:374px;width:33px;height:1px;background:#808080;"></div>
<div class="t" style="left:185.60000000000002px;width:300px;text-align:right;top:377.11px;font-size:10.5px;color:#000;">15</div>
<div class="t" style="left:489.5px;top:376.69px;font-size:11px;color:#000;">|</div>
<div class="t" style="left:207.60000000000002px;width:300px;text-align:right;top:377.11px;font-size:10.5px;color:#000;">10</div>
<div style="left:474px;top:398px;width:33px;height:1px;background:#808080;"></div>
<div class="t" style="left:185.60000000000002px;width:300px;text-align:right;top:401.11px;font-size:10.5px;color:#000;">30</div>
<div class="t" style="left:489.5px;top:400.69px;font-size:11px;color:#000;">|</div>
<div class="t" style="left:207.60000000000002px;width:300px;text-align:right;top:401.11px;font-size:10.5px;color:#000;">11</div>
<div style="left:474px;top:422px;width:33px;height:1px;background:#808080;"></div>
<div class="t" style="left:185.60000000000002px;width:300px;text-align:right;top:425.11px;font-size:10.5px;color:#000;">45</div>
<div class="t" style="left:489.5px;top:424.69px;font-size:11px;color:#000;">|</div>
<div class="t" style="left:207.60000000000002px;width:300px;text-align:right;top:425.11px;font-size:10.5px;color:#000;">12</div>
<div style="left:452px;top:446px;width:55px;height:1px;background:#808080;"></div>
<div class="t" style="left:170px;width:300px;text-align:right;top:450.61px;font-size:17px;color:#000;-webkit-text-stroke:0.45px #000;">11</div>
<div class="t" style="left:474px;top:448.71px;font-size:10.5px;color:#000;">00</div>
<div class="t" style="left:489.5px;top:448.69px;font-size:11px;color:#000;">|</div>
<div class="t" style="left:207.60000000000002px;width:300px;text-align:right;top:449.11px;font-size:10.5px;color:#000;">13</div>
<div style="left:474px;top:470px;width:33px;height:1px;background:#808080;"></div>
<div class="t" style="left:185.60000000000002px;width:300px;text-align:right;top:473.11px;font-size:10.5px;color:#000;">15</div>
<div class="t" style="left:489.5px;top:472.69px;font-size:11px;color:#000;">|</div>
<div class="t" style="left:207.60000000000002px;width:300px;text-align:right;top:473.11px;font-size:10.5px;color:#000;">14</div>
<div style="left:474px;top:494px;width:33px;height:1px;background:#808080;"></div>
<div class="t" style="left:185.60000000000002px;width:300px;text-align:right;top:497.11px;font-size:10.5px;color:#000;">30</div>
<div class="t" style="left:489.5px;top:496.69px;font-size:11px;color:#000;">|</div>
<div class="t" style="left:207.60000000000002px;width:300px;text-align:right;top:497.11px;font-size:10.5px;color:#000;">15</div>
<div style="left:474px;top:518px;width:33px;height:1px;background:#808080;"></div>
<div class="t" style="left:185.60000000000002px;width:300px;text-align:right;top:521.11px;font-size:10.5px;color:#000;">45</div>
<div class="t" style="left:489.5px;top:520.69px;font-size:11px;color:#000;">|</div>
<div class="t" style="left:207.60000000000002px;width:300px;text-align:right;top:521.11px;font-size:10.5px;color:#000;">16</div>
<div style="left:1394px;top:150px;width:16px;height:400px;background:#f0f0f0;"></div>
<svg style="position:absolute;left:1398px;top:160px" width="8" height="10" viewBox="0 0 8 10"><path d="M2 1L6 5L2 9" stroke="#555" stroke-width="1.8" fill="none"/></svg>
<svg style="position:absolute;left:1397px;top:187px" width="10" height="7" viewBox="0 0 10 7"><path d="M1 6L5 2L9 6" stroke="#555" stroke-width="1.8" fill="none"/></svg>
<div style="left:1394px;top:516px;width:15px;height:17px;background:#c8c8c8;"></div>
<svg style="position:absolute;left:1397px;top:538px" width="10" height="7" viewBox="0 0 10 7"><path d="M1 1L5 5L9 1" stroke="#555" stroke-width="1.8" fill="none"/></svg>
<div style="left:449px;top:550px;width:961px;height:19px;background:linear-gradient(#f4f3ec,#c8c7b4);"></div>
<div style="left:449px;top:569px;width:961px;height:1px;background:#a0a0a0;"></div>
<div style="left:511px;top:551px;width:1px;height:18px;background:#a0a0a0;"></div>
<div style="left:512px;top:551px;width:1px;height:18px;background:#fff;"></div>
<div style="left:1392px;top:551px;width:1px;height:18px;background:#909090;"></div>
<div class="t" style="left:680px;top:554.95px;font-size:11.28px;color:#000;">Всего талонов: 12&nbsp; Занято талонов: 0&nbsp; Осталось талонов: 12&nbsp; Сверх расписания: 0</div>
<div style="left:448px;top:570px;width:962px;height:8px;background:#f0f0f0;"></div>
<div style="left:535px;top:570px;width:789px;height:8px;box-sizing:border-box;border:1px solid #a0a0a0;border-top:none;background:#fff;"></div>
<div style="left:550px;top:573.5px;width:750px;height:1.4px;background:repeating-linear-gradient(90deg,#1a6ee0 0 1.4px,transparent 1.4px 3px);"></div>
<svg style="position:absolute;left:540px;top:571px" width="9" height="6" viewBox="0 0 9 6"><path d="M1.5 1L4.5 4L7.5 1" stroke="#000" stroke-width="1.5" fill="none"/></svg>
<svg style="position:absolute;left:1311px;top:570px" width="9" height="6" viewBox="0 0 9 6"><path d="M1 1L4.5 4.5L8 1" stroke="#000" stroke-width="1.6" fill="none"/></svg>
<div style="left:448px;top:599px;width:5px;height:1px;background:#000;"></div>
<div style="left:528px;top:599px;width:882px;height:1px;background:#000;"></div>
<div style="left:453px;top:580px;width:76px;height:20px;box-sizing:border-box;border:1px solid #000;border-bottom:none;background:#f0f0f0;"></div>
<div class="t" style="left:458px;top:585.69px;font-size:11px;color:#000;">Доп. талоны</div>
<div class="t" style="left:533px;top:585.69px;font-size:11px;color:#000;">Лист ожидания</div>
<div style="left:616px;top:584px;width:1px;height:14px;background:#a0a0a0;"></div>
<div class="t" style="left:620px;top:585.69px;font-size:11px;color:#000;">Вызов на дом</div>
<div style="left:694px;top:584px;width:1px;height:14px;background:#a0a0a0;"></div>
<div style="left:696px;top:582px;width:125px;height:16px;background:#f0f0f0;"></div>
<div class="t" style="left:699px;top:585.69px;font-size:11px;color:#000;">Запись через интернет</div>
<div style="left:448px;top:600px;width:962px;height:127px;background:#f0f0f0;"></div>
<div style="left:448px;top:602px;width:962px;height:125px;box-sizing:border-box;border:1px solid #909090;background:#fdf9d0;"></div>
<div style="left:449px;top:603px;width:960px;height:19px;box-sizing:border-box;border:1px solid #000;background:#f0f0f0;box-shadow:inset 1px 1px 0 #fff;"></div>
<div style="left:460px;top:603px;width:1px;height:19px;background:#000;"></div>
<div style="left:461px;top:604px;width:1px;height:17px;background:#fff;"></div>
<div style="left:512px;top:603px;width:1px;height:19px;background:#000;"></div>
<div style="left:513px;top:604px;width:1px;height:17px;background:#fff;"></div>
<div style="left:1208px;top:603px;width:1px;height:19px;background:#000;"></div>
<div style="left:1209px;top:604px;width:1px;height:17px;background:#fff;"></div>
<div style="left:1327px;top:603px;width:1px;height:19px;background:#000;"></div>
<div style="left:1328px;top:604px;width:1px;height:17px;background:#fff;"></div>
<div class="t" style="left:186px;width:600px;text-align:center;top:607.69px;font-size:11px;color:#000;">№</div>
<div class="t" style="left:560px;width:600px;text-align:center;top:607.69px;font-size:11px;color:#000;">Талоны за пределами расписания (срочные, дополнительные ...)</div>
<div class="t" style="left:967px;width:600px;text-align:center;top:607.69px;font-size:11px;color:#000;">Дата рождения</div>
<div class="t" style="left:1067px;width:600px;text-align:center;top:607.69px;font-size:11px;color:#000;">Автор</div>
<div class="t" style="left:634px;width:600px;text-align:center;top:668.69px;font-size:11px;color:#808080;">Нет талонов вне расписания</div>
</body></html>
